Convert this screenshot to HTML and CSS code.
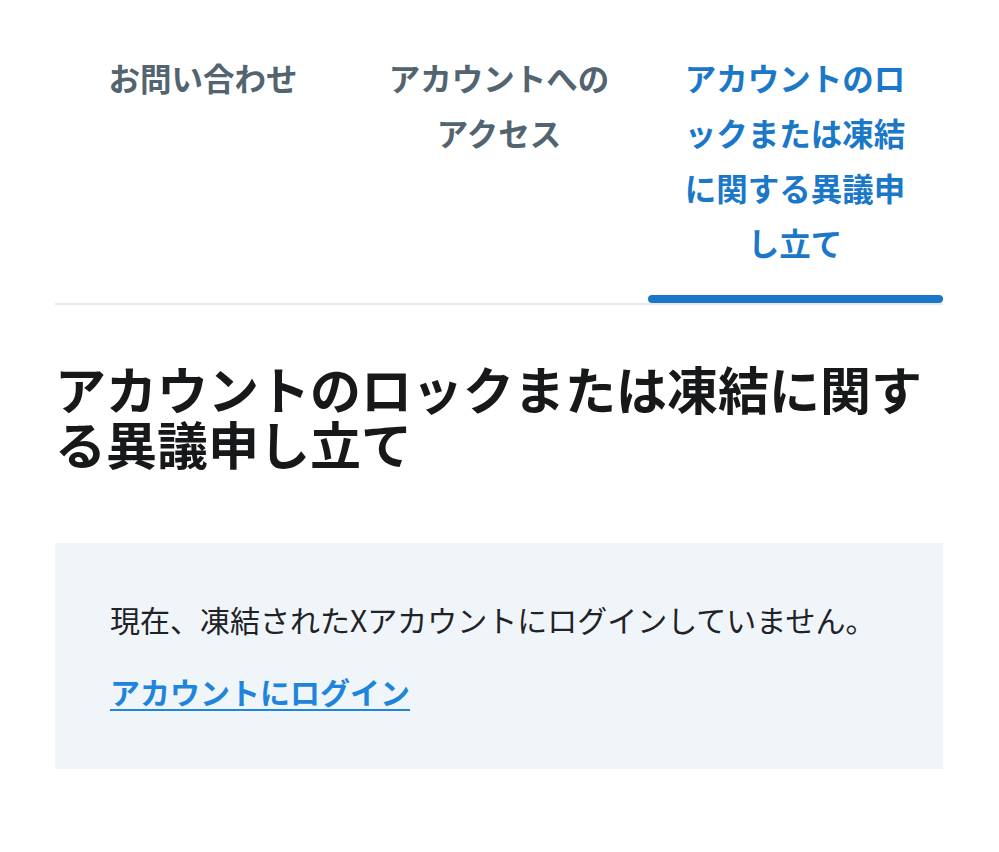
FILE: index.html
```html
<!DOCTYPE html>
<html lang="ja">

<head>
    <meta charset="UTF-8">
    <meta name="viewport" content="width=device-width, initial-scale=1.0">
    <title>アカウントのロックまたは凍結に関する異議申し立て</title>
    <link rel="stylesheet" href="styles.css">
</head>

<body>
    <div class="pagina">
        <nav class="pestanas">
            <a class="pestana" href="#">お問い合わせ</a>
            <a class="pestana" href="#">アカウントへのアクセス</a>
            <a class="pestana activa" href="#">アカウントのロックまたは凍結に関する異議申し立て</a>
        </nav>

        <h1 class="titulo">アカウントのロックまたは凍結に関する異議申し立て</h1>

        <section class="aviso">
            <p>現在、凍結されたXアカウントにログインしていません。</p>
            <a class="enlace" href="#">アカウントにログイン</a>
        </section>
    </div>
</body>

</html>
```

FILE: styles.css
```css
body {
    margin: 0;
    background-color: #fff;
    font-family: "Noto Sans CJK JP", "Noto Sans", sans-serif;
    color: #0f1419;
}

.pagina {
    padding: 0 56px 0 55px;
}

.pestanas {
    display: grid;
    grid-template-columns: repeat(3, 1fr);
    border-bottom: 2px solid #e7eaec;
}

.pestana {
    position: relative;
    padding: 50px 26px 33px;
    text-align: center;
    font-size: 31.5px;
    line-height: 55px;
    font-weight: bold;
    color: #536471;
    text-decoration: none;
}

.pestana.activa {
    color: #1b78c9;
}

.pestana.activa::after {
    content: "";
    position: absolute;
    left: 1px;
    right: 0;
    bottom: 0;
    height: 8px;
    border-radius: 4px;
    background-color: #1b78c9;
}

.titulo {
    margin: 56px 0 72px;
    font-size: 51px;
    line-height: 55px;
    font-weight: bold;
    color: #17181a;
}

.aviso {
    padding: 54px 55px 55px;
    background-color: #f0f5f9;
}

.aviso p {
    margin: 0 0 27px;
    font-size: 30px;
    line-height: 45px;
    color: #1f2326;
}

.enlace {
    display: inline-block;
    font-size: 30px;
    line-height: 45px;
    font-weight: bold;
    color: #1f85dc;
    text-decoration: underline;
    text-underline-offset: 5px;
    text-decoration-thickness: 2px;
}
```
